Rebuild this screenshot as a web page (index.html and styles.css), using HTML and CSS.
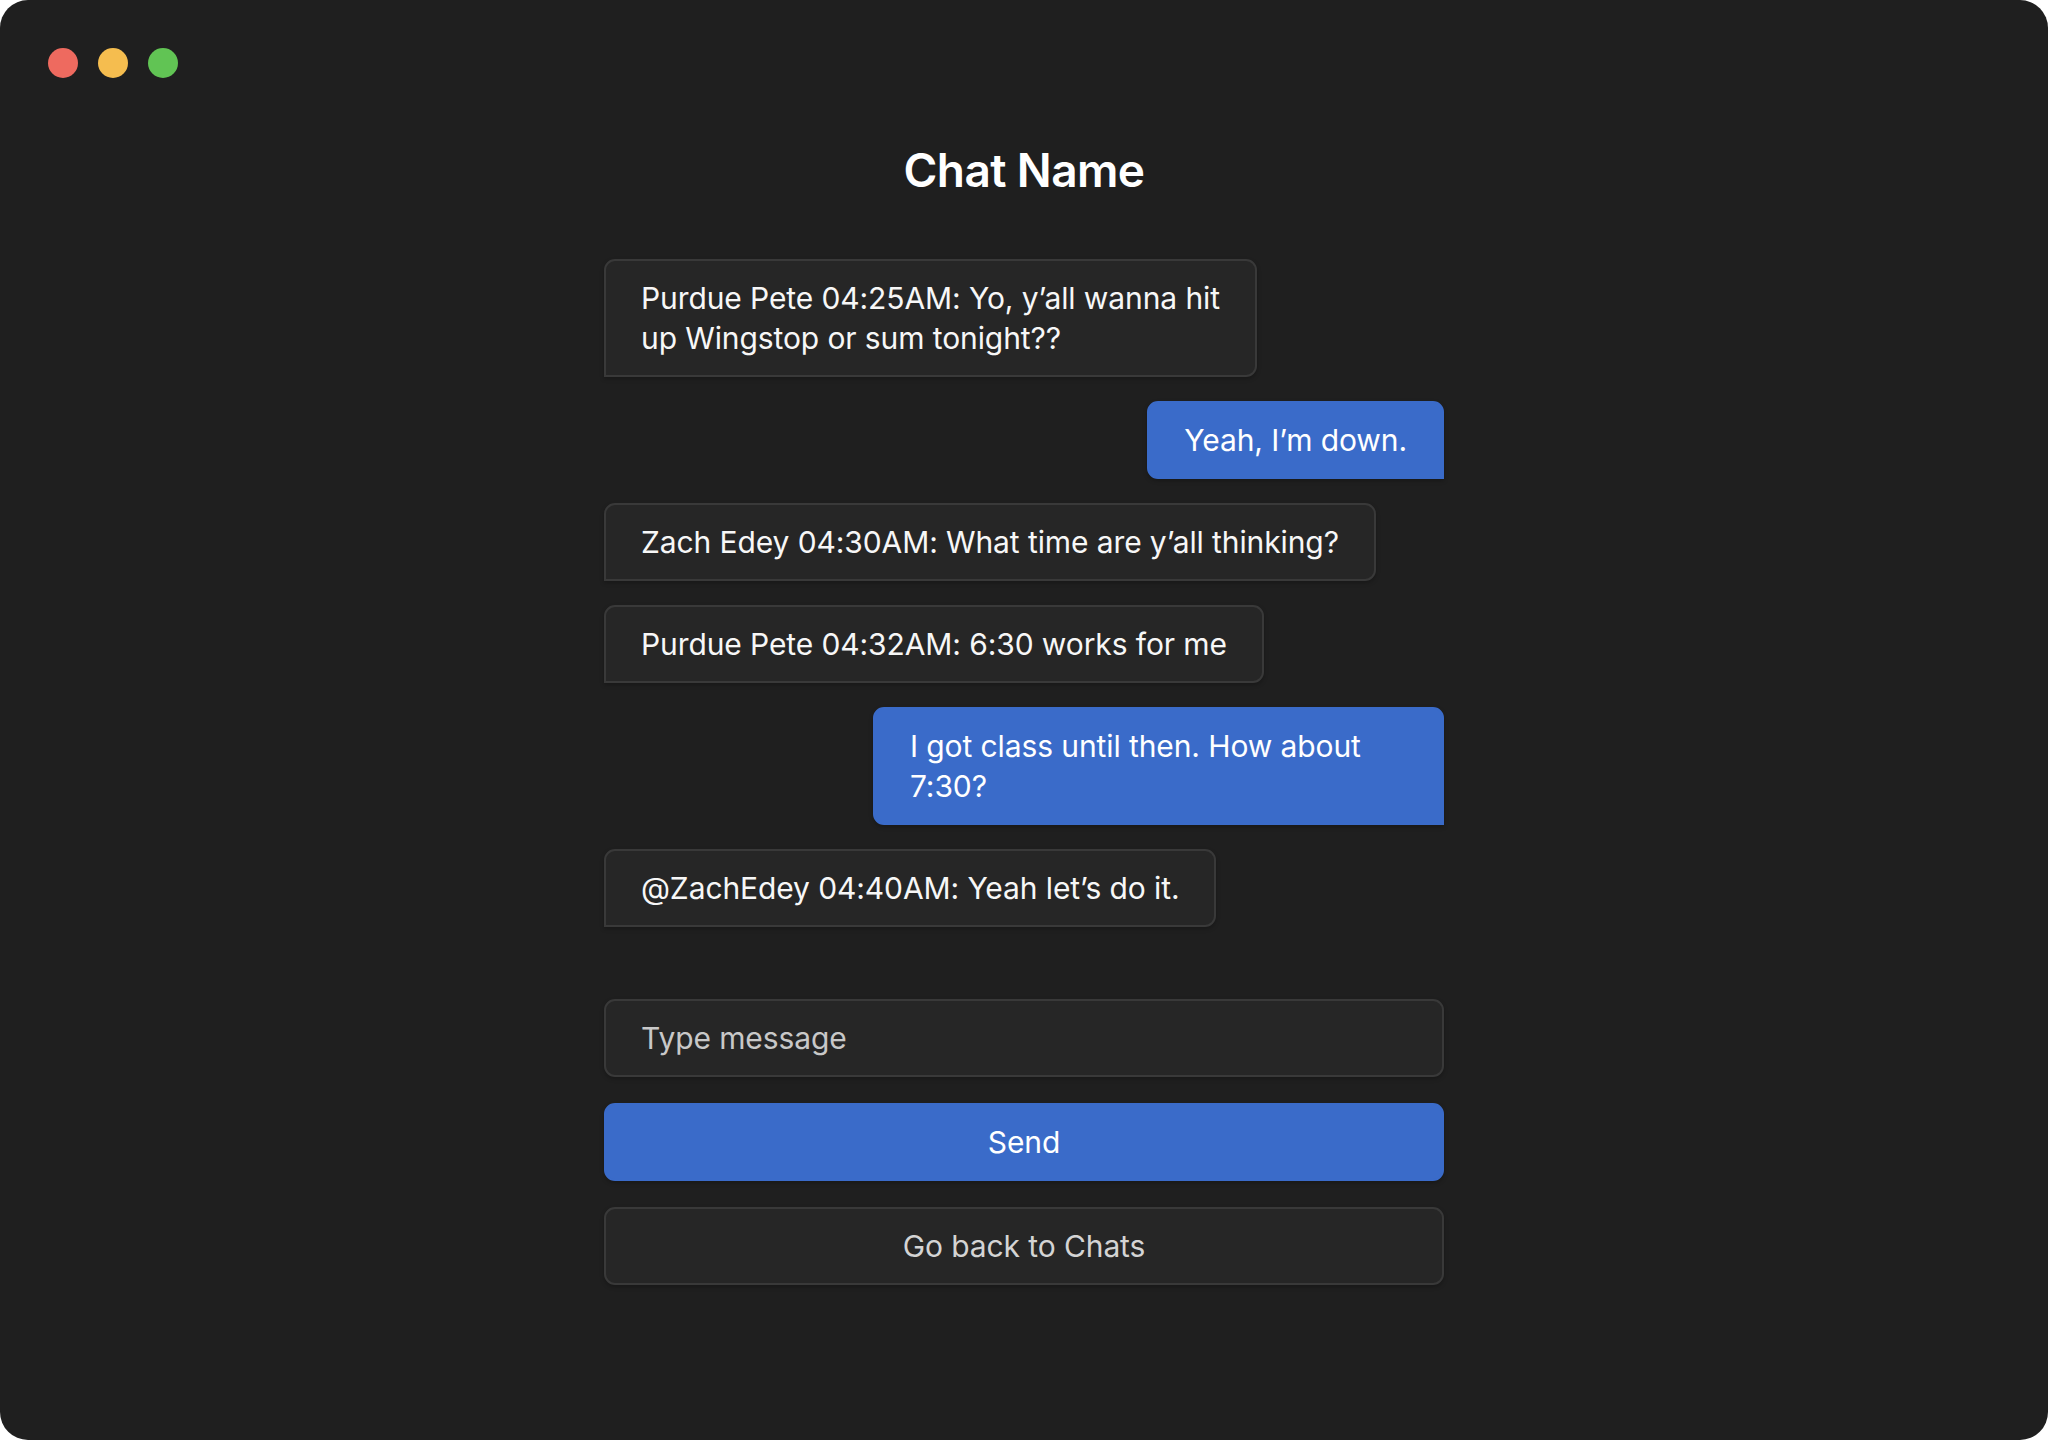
FILE: index.html
```html
<!DOCTYPE html>
<html lang="en">
<head>
<meta charset="utf-8">
<title>Chat Name</title>
<link rel="stylesheet" href="styles.css">
</head>
<body>
<div class="window">
  <div class="traffic">
    <span class="dot red"></span>
    <span class="dot yellow"></span>
    <span class="dot green"></span>
  </div>
  <h1 class="title">Chat Name</h1>
  <main class="chat">
    <div class="messages">
      <div class="bubble received">Purdue Pete 04:25AM: Yo, y’all wanna hit<br>up Wingstop or sum tonight??</div>
      <div class="bubble sent">Yeah, I’m down.</div>
      <div class="bubble received">Zach Edey 04:30AM: What time are y’all thinking?</div>
      <div class="bubble received">Purdue Pete 04:32AM: 6:30 works for me</div>
      <div class="bubble sent wide">I got class until then. How about<br>7:30?</div>
      <div class="bubble received">@ZachEdey 04:40AM: Yeah let’s do it.</div>
    </div>
    <form class="composer">
      <input class="field" type="text" placeholder="Type message">
      <button class="btn primary" type="button">Send</button>
      <button class="btn secondary" type="button">Go back to Chats</button>
    </form>
  </main>
</div>
</body>
</html>
```
FILE: styles.css
```css
* { box-sizing: border-box; }
html, body { margin: 0; padding: 0; background: #ffffff; }
body { width: 2048px; height: 1440px; overflow: hidden; }

.window {
  width: 2048px;
  height: 1440px;
  background: #1f1f1f;
  border-radius: 28px;
  display: flex;
  flex-direction: column;
  align-items: center;
  font-family: Inter, "Liberation Sans", sans-serif;
  color: #f7f7f7;
}

.traffic {
  align-self: flex-start;
  display: flex;
  gap: 20px;
  padding: 48px 0 0 48px;
}
.dot { width: 30px; height: 30px; border-radius: 50%; display: block; }
.red { background: #ee6a5f; }
.yellow { background: #f5bd4f; }
.green { background: #61c454; }

.title {
  margin: 64px 0 0;
  font-size: 46px;
  line-height: 56px;
  font-weight: 600;
  letter-spacing: -0.6px;
  color: #ffffff;
}

.chat {
  width: 840px;
  margin-top: 61px;
  display: flex;
  flex-direction: column;
}

.messages {
  display: flex;
  flex-direction: column;
  gap: 24px;
}

.bubble {
  font-size: 30px;
  line-height: 40px;
  letter-spacing: -0.1px;
  padding: 17px 35px;
  border: 2px solid #393939;
  border-radius: 11px;
  background: #262626;
  box-shadow: 0 2px 4px rgba(0,0,0,0.25);
}
.received {
  align-self: flex-start;
  border-bottom-left-radius: 0;
}
.sent {
  align-self: flex-end;
  background: #3a6bc9;
  border-color: #3a6bc9;
  border-bottom-right-radius: 0;
  color: #ffffff;
}
.wide { width: 571px; }

.composer {
  margin: 72px 0 0;
  display: flex;
  flex-direction: column;
  gap: 26px;
}

.field, .btn {
  height: 78px;
  width: 100%;
  border-radius: 11px;
  font-family: Inter, "Liberation Sans", sans-serif;
  font-size: 30px;
  letter-spacing: -0.1px;
  box-shadow: 0 2px 4px rgba(0,0,0,0.25);
}
.field {
  background: #262626;
  border: 2px solid #393939;
  padding: 0 35px;
  color: #f0f0f0;
  outline: none;
}
.field::placeholder { color: #c8c8c8; }

.btn { cursor: pointer; }
.primary {
  background: #3a6bc9;
  border: 2px solid #3a6bc9;
  color: #ffffff;
}
.secondary {
  background: #262626;
  border: 2px solid #393939;
  color: #d4d4d4;
}
```
